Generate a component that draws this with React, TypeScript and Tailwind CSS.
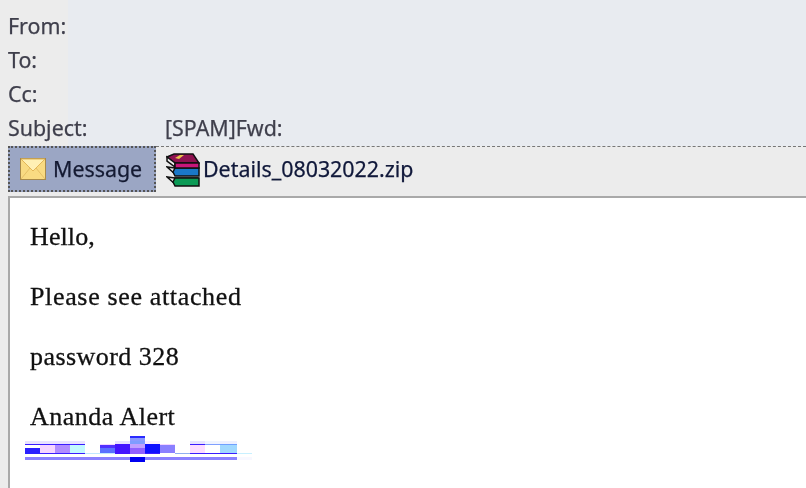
const labelClass = "w-[157px] shrink-0";

const smear: [number, number, number, number, string][] = [
  [25, 441, 60, 3, "#e8e2ff"], [25, 444, 60, 1, "#3a1cff"], [25, 448, 15, 6, "#2a20ff"],
  [40, 445, 15, 8, "#f5d5ff"], [55, 445, 15, 8, "#b08cff"], [70, 445, 15, 8, "#c2f8ff"],
  [40, 453, 45, 1, "#3a1cff"], [85, 453, 15, 1, "#c0e8ff"],
  [100, 444, 15, 1, "#f5d5ff"], [100, 445, 15, 3, "#5030ff"], [100, 448, 15, 5, "#5a70ff"], [100, 453, 15, 1, "#c0e8ff"],
  [115, 441, 15, 3, "#e8e2ff"], [115, 444, 15, 10, "#4414ff"],
  [130, 436, 15, 2, "#2a2aff"], [130, 438, 15, 3, "#8a9aff"], [130, 441, 15, 3, "#7f9cff"],
  [130, 444, 15, 4, "#c0a0ff"], [130, 448, 15, 6, "#9060ff"],
  [145, 441, 15, 3, "#fbeeff"], [145, 444, 15, 9, "#1010ff"], [145, 453, 15, 1, "#3a1cff"],
  [160, 444, 15, 1, "#f5d5ff"], [160, 445, 15, 8, "#8a80ff"],
  [175, 453, 15, 1, "#90b0f0"],
  [190, 441, 15, 3, "#e8e2ff"], [190, 444, 15, 1, "#3a1cff"], [190, 445, 15, 8, "#fddcff"], [190, 453, 15, 1, "#3a1cff"],
  [205, 441, 15, 3, "#f0f4ff"], [205, 444, 15, 1, "#80a0ff"], [205, 453, 15, 1, "#3a1cff"],
  [220, 441, 17, 3, "#eef0ff"], [220, 444, 17, 1, "#70a0ff"], [220, 445, 17, 8, "#a0d8ff"], [220, 453, 17, 1, "#3a1cff"],
  [237, 453, 15, 1, "#c8f0ff"],
  [25, 457, 212, 3, "#8a80ff"], [237, 457, 15, 3, "#f8f8ff"],
  [130, 457, 15, 5, "#0000f0"],
];

function EnvelopeIcon() {
  return (
    <svg width="26" height="22" viewBox="0 0 26 22" className="shrink-0">
      <rect x="0.5" y="0.5" width="25" height="21" fill="#f9db82" stroke="#a88a4a" />
      <path d="M1 1 L13 13 L25 1 Z" fill="#fff0b4" stroke="#e2b658" />
      <path d="M1 21 L10 10 M25 21 L16 10" fill="none" stroke="#e6c066" />
    </svg>
  );
}

function ArchiveIcon() {
  return (
    <svg width="34" height="34" viewBox="0 0 34 34" className="shrink-0">
      <path d="M1 24 L9 31 H32 V25 H9 Z" fill="#efefef" stroke="#111" strokeWidth="1.5" />
      <path d="M9 25 H33 V33 H9 L7 29 Z" fill="#0b9a55" stroke="#111" strokeWidth="1.5" />
      <path d="M1 14 L9 21 H32 V15 H9 Z" fill="#efefef" stroke="#111" strokeWidth="1.5" />
      <path d="M9 15 H33 V23 H9 L7 19 Z" fill="#1a78c8" stroke="#111" strokeWidth="1.5" />
      <path d="M1 4 L9 10 H33 L27 1 H8 Z" fill="#8f1250" stroke="#111" strokeWidth="1.5" />
      <path d="M1 4 L9 10 V14 L1 8 Z" fill="#efefef" stroke="#111" strokeWidth="1.5" />
      <path d="M9 5 L14 2 H18 L13 6 Z" fill="#e7c34a" />
      <path d="M9 10 H33 V15 H9 Z" fill="#c8177a" stroke="#111" strokeWidth="1.5" />
    </svg>
  );
}

export default function App() {
  return (
    <div className="h-[488px] w-[806px] overflow-hidden bg-[#ececec] font-['Noto_Sans',sans-serif] text-[21.4px] text-[#3f3f4c] [-webkit-text-stroke:0.25px]">
      <div className="h-[146px] bg-[linear-gradient(90deg,#ececec_68px,#e8ebf0_68px)] px-2 pt-[9px] leading-[34px]">
        <div className="h-[34px] blur-[0.4px]">From:</div>
        <div className="h-[34px] blur-[0.4px]">To:</div>
        <div className="h-[34px] blur-[0.4px]">Cc:</div>
        <div className="flex h-[34px] blur-[0.4px]">
          <div className={labelClass}>Subject:</div>
          <div>[SPAM]Fwd:</div>
        </div>
      </div>
      <div className="flex h-[46px] items-stretch pl-2">
        <div className="flex w-[148px] items-center gap-[7px] border-2 border-dotted border-[#555] bg-[#9ba6c4] pl-[10px] text-[#141a32]">
          <EnvelopeIcon />
          <span className="blur-[0.4px]">Message</span>
        </div>
        <div className="flex flex-1 items-center border-t border-dashed border-[#777] pl-[10px] text-[#10183a]">
          <ArchiveIcon />
          <span className="ml-[3px] blur-[0.4px]">Details_08032022.zip</span>
        </div>
      </div>
      <div className="mt-[4px] ml-2 h-[292px] border-t-2 border-l-2 border-[#a9a9a9] bg-white pt-6 pl-5 font-['Liberation_Serif',serif] text-[26px] leading-[30px] text-[#111] [-webkit-text-stroke:0.3px]">
        <p className="h-[60px] tracking-[0.1px] blur-[0.3px]">Hello,</p>
        <p className="h-[60px] tracking-[0.65px] blur-[0.3px]">Please see attached</p>
        <p className="h-[60px] tracking-[0.45px] blur-[0.3px]">password 328</p>
        <p className="tracking-[0.5px] blur-[0.3px]">Ananda Alert</p>
      </div>
      <svg width="806" height="488" viewBox="0 0 806 488" className="pointer-events-none absolute top-0 left-0">
        {smear.map(([x, y, w, h, fill], i) => (
          <rect key={i} x={x} y={y} width={w} height={h} fill={fill} />
        ))}
      </svg>
    </div>
  );
}
